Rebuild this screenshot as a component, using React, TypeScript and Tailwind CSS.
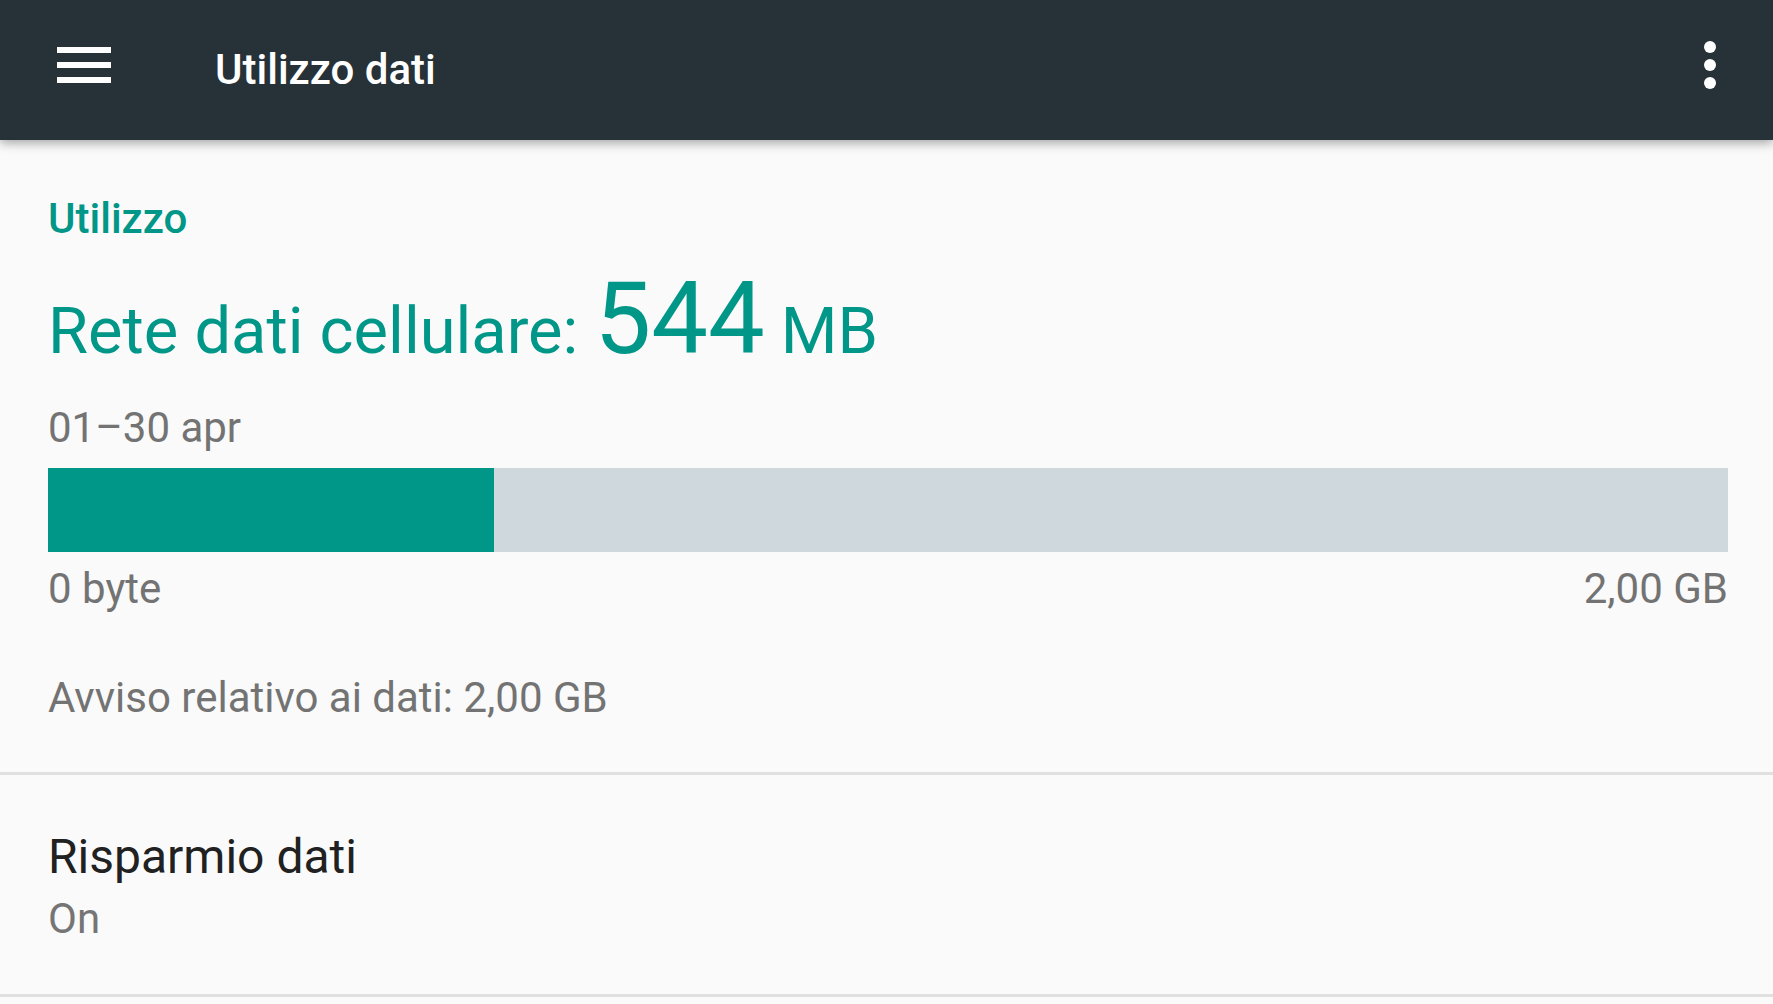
import React from "react";

const USED_MB = 544;
const LIMIT_MB = 2048;

function MenuIcon() {
  return (
    <div className="flex w-[54px] flex-col gap-[9px] mb-[10px]">
      <div className="h-[6px] bg-white" />
      <div className="h-[6px] bg-white" />
      <div className="h-[6px] bg-white" />
    </div>
  );
}

function MoreIcon() {
  return (
    <div className="flex flex-col items-center gap-[6px] mb-[10px]">
      <div className="h-[12px] w-[12px] rounded-full bg-white" />
      <div className="h-[12px] w-[12px] rounded-full bg-white" />
      <div className="h-[12px] w-[12px] rounded-full bg-white" />
    </div>
  );
}

export default function App() {
  const pct = (USED_MB / LIMIT_MB) * 100;

  return (
    <div
      className="w-[1773px] h-[1004px] overflow-hidden bg-[#fafafa] flex flex-col"
      style={{ fontFamily: "Roboto, 'Noto Sans', sans-serif" }}
    >
      {/* toolbar */}
      <header className="relative z-10 flex h-[140px] shrink-0 items-center bg-[#263238] pl-[57px] pr-[57px] shadow-[0_3px_10px_rgba(0,0,0,0.35)]">
        <MenuIcon />
        <h1 className="ml-[104px] flex-1 text-[42px] font-medium leading-[140px] text-white">Utilizzo dati</h1>
        <MoreIcon />
      </header>

      {/* usage section */}
      <section className="pl-[48px] pr-[45px] pt-[49px]">
        <p className="text-[42px] font-medium leading-[60px] text-[#009688]">Utilizzo</p>
        <p className="mt-[19px] text-[65px] leading-none text-[#009688]">
          Rete dati cellulare: <span className="text-[101px] leading-none">544</span> MB
        </p>
        <p className="mt-[34px] text-[42px] leading-[50px] text-[#737373]">01–30 apr</p>

        <div className="mt-[15px] flex h-[84px] bg-[#cfd8dc]">
          <div className="h-full bg-[#009688]" style={{ width: `${pct}%` }} />
        </div>

        <div className="mt-[12px] flex justify-between text-[42px] leading-[50px] text-[#737373]">
          <span>0 byte</span>
          <span>2,00 GB</span>
        </div>

        <p className="mt-[59px] text-[42px] leading-[50px] text-[#737373]">Avviso relativo ai dati: 2,00 GB</p>
      </section>

      <div className="mt-[49px] h-[3px] shrink-0 bg-[#e0e0e0]" />

      {/* data saver */}
      <section className="pl-[48px] pt-[52px]">
        <p className="text-[48px] leading-[60px] text-[#212121]">Risparmio dati</p>
        <p className="mt-[7px] text-[42px] leading-[50px] text-[#757575]">On</p>
      </section>

      <div className="mt-[50px] h-[3px] shrink-0 bg-[#e0e0e0]" />
    </div>
  );
}
